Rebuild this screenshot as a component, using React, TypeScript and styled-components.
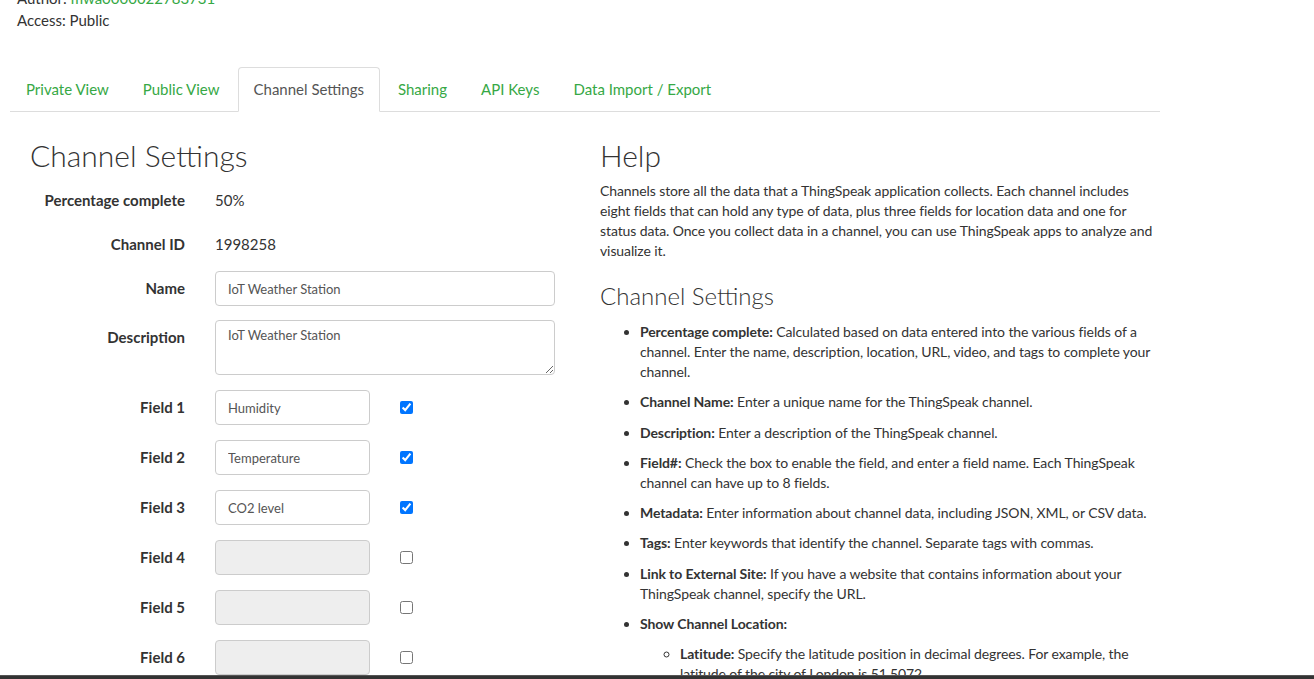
import React from 'react';
import styled, { createGlobalStyle } from 'styled-components';

const GlobalStyle = createGlobalStyle`
  html, body {
    margin: 0;
    padding: 0;
    background: #fff;
    overflow: hidden;
  }
  body {
    font-family: Lato, "Liberation Sans", sans-serif;
    font-size: 16px;
    color: #333;
  }
`;

const green = '#36a845';

const Page = styled.div`
  width: 1150px;
  padding-left: 10px;
`;

const Meta = styled.div`
  margin-top: -13px;
  padding-left: 7px;
  font-size: 15px;
  line-height: 22px;
`;

const MetaLink = styled.a`
  color: ${green};
  text-decoration: none;
`;

const Tabs = styled.ul`
  display: flex;
  list-style: none;
  margin: 36px 0 0;
  padding: 0;
  border-bottom: 1px solid #ddd;
`;

const Tab = styled.li<{ $active?: boolean }>`
  margin: 0 2px -1px 0;
  padding: 10px 15px;
  line-height: 23px;
  font-size: 15px;
  color: ${(p) => (p.$active ? '#555' : green)};
  background: ${(p) => (p.$active ? '#fff' : 'transparent')};
  border: 1px solid ${(p) => (p.$active ? '#ddd' : 'transparent')};
  border-bottom-color: ${(p) => (p.$active ? '#fff' : 'transparent')};
  border-radius: 4px 4px 0 0;
  cursor: pointer;
`;

const Columns = styled.div`
  display: grid;
  grid-template-columns: 575px 575px;
`;

const Col = styled.div<{ $right?: boolean }>`
  padding: ${(p) => (p.$right ? '0 0 0 15px' : '0 15px')};
`;

const Title = styled.h2<{ $indent?: boolean }>`
  margin: 27px 0 0;
  padding-left: ${(p) => (p.$indent ? '5px' : '0')};
  font-size: 30px;
  line-height: 33px;
  font-weight: 300;
  color: #333;
`;

const Form = styled.div`
  display: grid;
  grid-template-columns: 160px 1fr;
  column-gap: 30px;
  align-items: start;
  margin-top: 11px;
`;

const Label = styled.div<{ $static?: boolean; $gap?: number }>`
  text-align: right;
  font-weight: 700;
  font-size: 15px;
  line-height: ${(p) => (p.$static ? '34px' : '35px')};
  margin-bottom: ${(p) => p.$gap ?? (p.$static ? 10 : 15)}px;
`;

const Value = styled.div`
  font-size: 15px;
  line-height: 34px;
  margin-bottom: 10px;
`;

const TextInput = styled.input<{ $w?: number; $gap?: number }>`
  box-sizing: border-box;
  width: ${(p) => (p.$w ? `${p.$w}px` : '340px')};
  height: 35px;
  padding: 6px 12px;
  margin: 0 0 ${(p) => p.$gap ?? 15}px;
  border: 1px solid #ccc;
  border-radius: 4px;
  font-family: Lato, "Liberation Sans", sans-serif;
  font-size: 13px;
  color: #555;
  background: #fff;

  &:disabled {
    background: #eee;
  }
`;

const TextArea = styled.textarea`
  box-sizing: border-box;
  width: 340px;
  height: 55px;
  padding: 6px 12px;
  margin: 0 0 15px;
  border: 1px solid #ccc;
  border-radius: 4px;
  font-family: Lato, "Liberation Sans", sans-serif;
  font-size: 13px;
  color: #555;
  display: block;
`;

const FieldControl = styled.div`
  display: flex;
  align-items: flex-start;
  gap: 30px;
`;

const Check = styled.input`
  width: 13px;
  height: 13px;
  margin: 11px 0 0;
`;

const HelpText = styled.p`
  margin: 9px 0 0;
  font-size: 14px;
  line-height: 20px;
  letter-spacing: -0.1px;
`;

const SubTitle = styled.h3`
  margin: 22px 0 13px;
  font-size: 24px;
  line-height: 26px;
  font-weight: 300;
`;

const List = styled.ul<{ $nested?: boolean }>`
  margin: ${(p) => (p.$nested ? '10px 0 0' : '0')};
  padding-left: 40px;
  list-style: ${(p) => (p.$nested ? 'circle' : 'disc')};
  font-size: 14px;
  line-height: 20px;
  letter-spacing: -0.1px;
`;

const Item = styled.li`
  margin-bottom: 10.3px;

  b {
    font-weight: 700;
  }
`;

const BottomBar = styled.div`
  position: fixed;
  left: 0;
  right: 0;
  bottom: 0;
  height: 3px;
  background: #333;
  border-top: 1px solid #555;
`;

const tabs = ['Private View', 'Public View', 'Channel Settings', 'Sharing', 'API Keys', 'Data Import / Export'];

const fields = [
  { n: 1, v: 'Humidity', on: true },
  { n: 2, v: 'Temperature', on: true },
  { n: 3, v: 'CO2 level', on: true },
  { n: 4, v: '', on: false },
  { n: 5, v: '', on: false },
  { n: 6, v: '', on: false },
];

export default function App() {
  return (
    <>
      <GlobalStyle />
      <Page>
        <Meta>
          <div>
            Author: <MetaLink href="#">mwa0000022783731</MetaLink>
          </div>
          <div>Access: Public</div>
        </Meta>

        <Tabs>
          {tabs.map((t) => (
            <Tab key={t} $active={t === 'Channel Settings'}>
              {t}
            </Tab>
          ))}
        </Tabs>

        <Columns>
          <Col>
            <Title $indent>Channel Settings</Title>
            <Form>
              <Label $static>Percentage complete</Label>
              <Value>50%</Value>
              <Label $static>Channel ID</Label>
              <Value>1998258</Value>
              <Label $gap={14}>Name</Label>
              <TextInput defaultValue="IoT Weather Station" $gap={14} />
              <Label>Description</Label>
              <TextArea defaultValue="IoT Weather Station" />
              {fields.map((f) => (
                <React.Fragment key={f.n}>
                  <Label>Field {f.n}</Label>
                  <FieldControl>
                    <TextInput $w={155} defaultValue={f.v} disabled={!f.on} />
                    <Check type="checkbox" defaultChecked={f.on} />
                  </FieldControl>
                </React.Fragment>
              ))}
            </Form>
          </Col>

          <Col $right>
            <Title>Help</Title>
            <HelpText>
              Channels store all the data that a ThingSpeak application collects. Each channel includes eight
              fields that can hold any type of data, plus three fields for location data and one for status data.
              Once you collect data in a channel, you can use ThingSpeak apps to analyze and visualize it.
            </HelpText>
            <SubTitle>Channel Settings</SubTitle>
            <List>
              <Item>
                <b>Percentage complete:</b> Calculated based on data entered into the various fields of a channel.
                Enter the name, description, location, URL, video, and tags to complete your channel.
              </Item>
              <Item>
                <b>Channel Name:</b> Enter a unique name for the ThingSpeak channel.
              </Item>
              <Item>
                <b>Description:</b> Enter a description of the ThingSpeak channel.
              </Item>
              <Item>
                <b>Field#:</b> Check the box to enable the field, and enter a field name. Each ThingSpeak channel
                can have up to 8 fields.
              </Item>
              <Item>
                <b>Metadata:</b> Enter information about channel data, including JSON, XML, or CSV data.
              </Item>
              <Item>
                <b>Tags:</b> Enter keywords that identify the channel. Separate tags with commas.
              </Item>
              <Item>
                <b>Link to External Site:</b> If you have a website that contains information about your
                ThingSpeak channel, specify the URL.
              </Item>
              <Item>
                <b>Show Channel Location:</b>
                <List $nested>
                  <Item>
                    <b>Latitude:</b> Specify the latitude position in decimal degrees. For example, the latitude
                    of the city of London is 51.5072.
                  </Item>
                </List>
              </Item>
            </List>
          </Col>
        </Columns>
      </Page>
      <BottomBar />
    </>
  );
}
